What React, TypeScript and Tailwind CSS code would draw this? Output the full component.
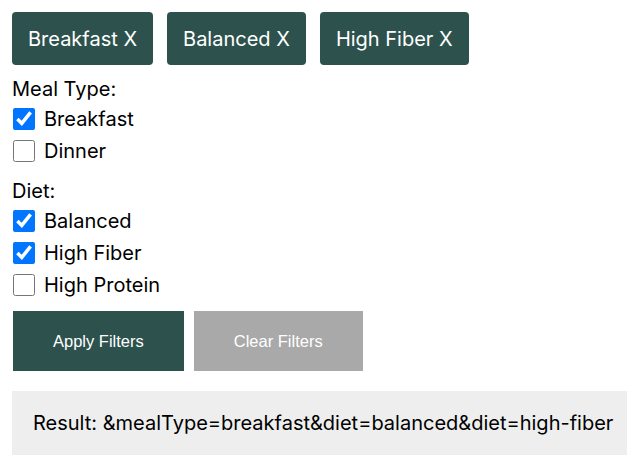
import React, { useState } from 'react';

const MEAL_TYPES = [
  { label: 'Breakfast', value: 'breakfast' },
  { label: 'Dinner', value: 'dinner' },
];

const DIETS = [
  { label: 'Balanced', value: 'balanced' },
  { label: 'High Fiber', value: 'high-fiber' },
  { label: 'High Protein', value: 'high-protein' },
];

interface GroupProps {
  title: string;
  options: { label: string; value: string }[];
  selected: string[];
  onToggle: (value: string) => void;
}

const CheckGroup: React.FC<GroupProps> = ({ title, options, selected, onToggle }) => (
  <div className="flex flex-col">
    <div className="text-[20px] leading-[27px] text-black">{title}</div>
    {options.map((opt) => (
      <label key={opt.value} className="flex items-center h-8 gap-[9px] cursor-pointer">
        <input
          type="checkbox"
          checked={selected.includes(opt.value)}
          onChange={() => onToggle(opt.value)}
          className="w-[22px] h-[22px] m-0 ml-px"
        />
        <span className="text-[20px] text-black">{opt.label}</span>
      </label>
    ))}
  </div>
);

const App: React.FC = () => {
  const [mealTypes, setMealTypes] = useState<string[]>(['breakfast']);
  const [diets, setDiets] = useState<string[]>(['balanced', 'high-fiber']);

  const toggle = (list: string[], set: (v: string[]) => void) => (value: string) =>
    set(list.includes(value) ? list.filter((v) => v !== value) : [...list, value]);

  const chips = [
    ...MEAL_TYPES.filter((m) => mealTypes.includes(m.value)).map((m) => ({ ...m, kind: 'meal' })),
    ...DIETS.filter((d) => diets.includes(d.value)).map((d) => ({ ...d, kind: 'diet' })),
  ];

  const query =
    mealTypes.map((m) => `&mealType=${m}`).join('') + diets.map((d) => `&diet=${d}`).join('');

  return (
    <div className="pl-3 pt-3 font-['Inter',sans-serif] bg-white min-h-screen">
      <div className="flex flex-col gap-[11px]">
        <div className="flex gap-[14px]">
          {chips.map((chip) => (
            <button
              key={chip.value}
              onClick={() =>
                chip.kind === 'meal'
                  ? toggle(mealTypes, setMealTypes)(chip.value)
                  : toggle(diets, setDiets)(chip.value)
              }
              className="h-[53px] px-4 rounded bg-[#2d524d] text-white text-[20px]"
            >
              {chip.label} X
            </button>
          ))}
        </div>

        <CheckGroup
          title="Meal Type:"
          options={MEAL_TYPES}
          selected={mealTypes}
          onToggle={toggle(mealTypes, setMealTypes)}
        />

        <CheckGroup
          title="Diet:"
          options={DIETS}
          selected={diets}
          onToggle={toggle(diets, setDiets)}
        />
      </div>

      <div className="mt-[10px] flex gap-[10px] pl-px font-['Liberation_Sans',Arial,sans-serif] text-[16.5px] text-white">
        <button className="h-[60px] px-10 bg-[#2d524d]">Apply Filters</button>
        <button
          className="h-[60px] px-10 bg-[#a9a9a9]"
          onClick={() => {
            setMealTypes([]);
            setDiets([]);
          }}
        >
          Clear Filters
        </button>
      </div>

      <div className="mt-5 h-16 flex items-center pl-[21px] bg-[#eeeeee] text-[20px] text-black">
        Result: {query}
      </div>
    </div>
  );
};

export default App;
